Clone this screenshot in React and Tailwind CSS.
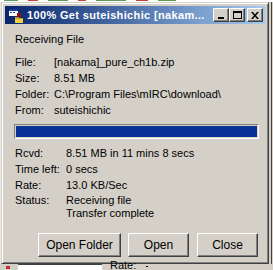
import React from "react";

const face = "bg-[#d4d0c8]";

const TitleIcon = () => (
  <svg width="16" height="16" viewBox="0 0 16 16" className="shrink-0">
    <rect x="1" y="2" width="9" height="7" fill="#ffffff" />
    <rect x="1" y="2" width="9" height="2" fill="#1c3c9c" />
    <rect x="2" y="5" width="2" height="1" fill="#1c3c9c" />
    <rect x="5" y="5" width="2" height="1" fill="#1c3c9c" />
    <rect x="9" y="6" width="4" height="4" fill="#8a1020" />
    <path d="M7 10h3l1 1h4v5H7z" fill="#f0d040" />
    <path d="M7 10h3l1 1h4v1H7z" fill="#c8a020" />
  </svg>
);

const CapButton = ({ children, className = "" }) => (
  <div
    className={`w-[16px] h-[14px] ${face} border border-t-white border-l-white border-r-[#404040] border-b-[#404040] shadow-[inset_-1px_-1px_0_#808080] flex items-center justify-center ${className}`}
  >
    {children}
  </div>
);

const Row = ({ label, value, labelW }) => (
  <div className="flex h-[16px] leading-[16px]">
    <span className={labelW}>{label}</span>
    <span className="whitespace-nowrap">{value}</span>
  </div>
);

const Button = ({ children, w }) => (
  <div
    className={`${w} h-[24px] ${face} border border-t-white border-l-white border-r-[#404040] border-b-[#404040] shadow-[inset_-1px_-1px_0_#808080] flex items-center justify-center text-[12px]`}
  >
    {children}
  </div>
);

export default function App() {
  return (
    <div className="w-[273px] h-[270px] overflow-hidden bg-[#d4d0c8] flex flex-col text-[11px] text-black font-['Liberation_Sans',Arial,sans-serif]">
      {/* desktop strip above */}
      <div className="h-[2px] bg-white flex gap-[10px] px-[4px]">
        <div className="w-[14px] h-[1px] bg-[#5a9a5a]" />
        <div className="w-[10px] h-[1px] bg-[#c04040]" />
        <div className="w-[20px] h-[1px] bg-[#5a9a5a]" />
        <div className="w-[8px] h-[1px] bg-[#c04040]" />
        <div className="w-[30px] h-[1px] bg-[#5a9a5a]" />
        <div className="w-[12px] h-[1px] bg-[#c04040]" />
        <div className="w-[18px] h-[1px] bg-[#5a9a5a]" />
      </div>

      <div className="flex">
        <div className="w-[1px] bg-[#e8e8e8]" />
        {/* window */}
        <div className="w-[268px] h-[262px] border border-t-[#d4d0c8] border-l-[#d4d0c8] border-r-[#404040] border-b-[#404040] shadow-[inset_1px_1px_0_#ffffff,inset_-1px_-1px_0_#808080] p-[3px] flex flex-col">
          <div className="h-[18px] bg-linear-to-r from-[#0a246a] to-[#a6caf0] flex items-center pl-[3px] pr-[2px]">
            <TitleIcon />
            <span className="ml-[3px] text-white font-bold text-[11px] whitespace-nowrap tracking-[0.35px]">
              100% Get suteishichic [nakam...
            </span>
            <div className="ml-auto flex items-center">
              <CapButton>
                <div className="w-[6px] h-[2px] bg-black mt-[6px] -ml-[1px]" />
              </CapButton>
              <CapButton>
                <div className="w-[9px] h-[8px] border border-black border-t-2 -mt-[1px]" />
              </CapButton>
              <CapButton className="ml-[2px]">
                <svg width="8" height="7" viewBox="0 0 8 7">
                  <path d="M0 0h2l2 2.5L6 0h2L5 3.5 8 7H6L4 4.5 2 7H0l3-3.5z" fill="#000" />
                </svg>
              </CapButton>
            </div>
          </div>

          <div className="flex-1 flex flex-col pl-[10px]">
            <div className="mt-[9px] leading-[13px]">Receiving File</div>
            <div className="mt-[8px]">
              <Row label="File:" value="[nakama]_pure_ch1b.zip" labelW="w-[39px]" />
              <Row label="Size:" value="8.51 MB" labelW="w-[39px]" />
              <Row label="Folder:" value="C:\Program Files\mIRC\download\" labelW="w-[39px]" />
              <Row label="From:" value="suteishichic" labelW="w-[39px]" />
            </div>

            <div className="mt-[6px] -ml-[1px] w-[245px] h-[15px] border border-t-[#808080] border-l-[#808080] border-r-white border-b-white p-[1px]">
              <div className="w-full h-full bg-[#0a3296]" />
            </div>

            <div className="mt-[6px]">
              <Row label="Rcvd:" value="8.51 MB in 11 mins 8 secs" labelW="w-[51px]" />
              <Row label="Time left:" value="0 secs" labelW="w-[51px]" />
              <Row label="Rate:" value="13.0 KB/Sec" labelW="w-[51px]" />
              <div className="flex mt-[1px] leading-[13px]">
                <span className="w-[51px]">Status:</span>
                <div className="flex flex-col">
                  <span>Receiving file</span>
                  <span>Transfer complete</span>
                </div>
              </div>
            </div>

            <div className="mt-[13px] flex pl-[23px]">
              <Button w="w-[83px]">Open Folder</Button>
              <div className="w-[7px]" />
              <Button w="w-[61px]">Open</Button>
              <div className="w-[8px]" />
              <Button w="w-[61px]">Close</Button>
            </div>
          </div>
        </div>
        {/* desktop strip right */}
        <div className="flex-1 flex">
          <div className="w-[2px]" />
          <div className="w-[1px] bg-[#404040]" />
        </div>
      </div>

      {/* window below */}
      <div className="flex-1 flex items-start">
        <div className="w-[6px]" />
        <div className="w-[4px] h-[3px] bg-[#c03030] mt-[2px]" />
        <div className="w-[8px]" />
        <div className="w-[84px] h-full bg-white border-t border-[#404040]" />
        <div className="w-[8px]" />
        <span className="leading-[10px] -mt-[4px] text-[11px]">Rate:</span>
        <div className="w-[10px]" />
        <div className="w-[2px] h-[1px] bg-black mt-[2px]" />
      </div>
    </div>
  );
}
